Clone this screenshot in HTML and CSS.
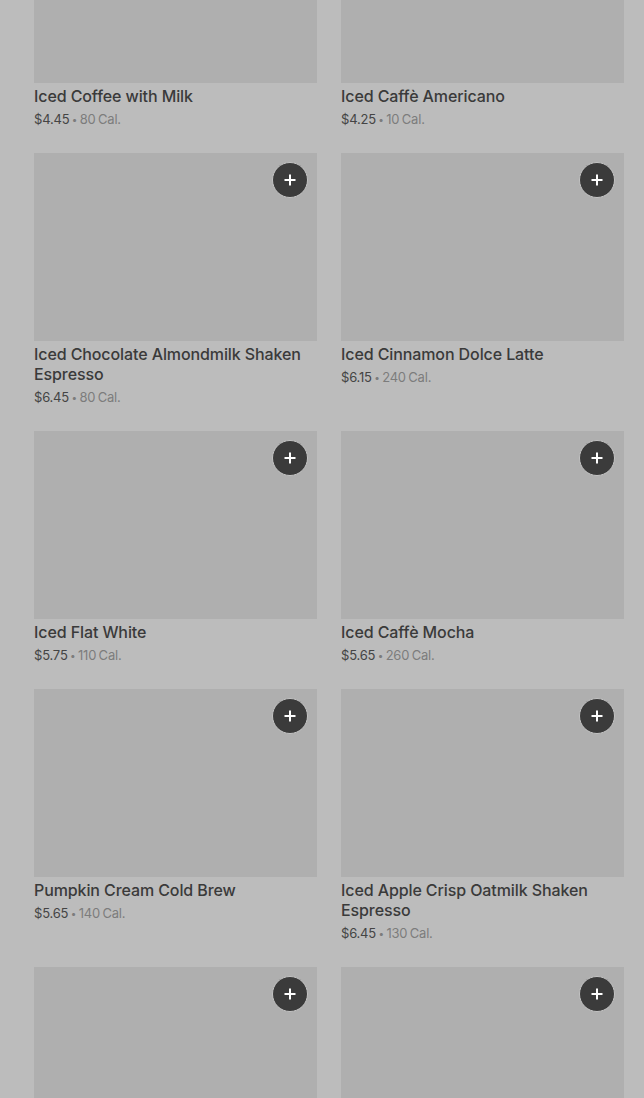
FILE: index.html
```html
<!DOCTYPE html>
<html lang="en">
<head>
<meta charset="utf-8">
<title>Menu</title>
<link rel="stylesheet" href="styles.css">
</head>
<body>
<main class="menu">
  <div class="grid">
    <article class="card">
      <div class="thumb"></div>
      <h3 class="name">Iced Coffee with Milk</h3>
      <p class="meta"><span class="price">$4.45</span> <span class="cal"><span class="dot">•</span> 80 Cal.</span></p>
    </article>
    <article class="card">
      <div class="thumb"></div>
      <h3 class="name">Iced Caffè Americano</h3>
      <p class="meta"><span class="price">$4.25</span> <span class="cal"><span class="dot">•</span> 10 Cal.</span></p>
    </article>
    <article class="card">
      <div class="thumb"><button class="add" aria-label="Add"><svg viewBox="0 0 14 14" width="14" height="14"><path d="M7 1.5v11M1.5 7h11" stroke="#fff" stroke-width="2"/></svg></button></div>
      <h3 class="name">Iced Chocolate Almondmilk Shaken Espresso</h3>
      <p class="meta"><span class="price">$6.45</span> <span class="cal"><span class="dot">•</span> 80 Cal.</span></p>
    </article>
    <article class="card">
      <div class="thumb"><button class="add" aria-label="Add"><svg viewBox="0 0 14 14" width="14" height="14"><path d="M7 1.5v11M1.5 7h11" stroke="#fff" stroke-width="2"/></svg></button></div>
      <h3 class="name">Iced Cinnamon Dolce Latte</h3>
      <p class="meta"><span class="price">$6.15</span> <span class="cal"><span class="dot">•</span> 240 Cal.</span></p>
    </article>
    <article class="card">
      <div class="thumb"><button class="add" aria-label="Add"><svg viewBox="0 0 14 14" width="14" height="14"><path d="M7 1.5v11M1.5 7h11" stroke="#fff" stroke-width="2"/></svg></button></div>
      <h3 class="name">Iced Flat White</h3>
      <p class="meta"><span class="price">$5.75</span> <span class="cal"><span class="dot">•</span> 110 Cal.</span></p>
    </article>
    <article class="card">
      <div class="thumb"><button class="add" aria-label="Add"><svg viewBox="0 0 14 14" width="14" height="14"><path d="M7 1.5v11M1.5 7h11" stroke="#fff" stroke-width="2"/></svg></button></div>
      <h3 class="name">Iced Caffè Mocha</h3>
      <p class="meta"><span class="price">$5.65</span> <span class="cal"><span class="dot">•</span> 260 Cal.</span></p>
    </article>
    <article class="card">
      <div class="thumb"><button class="add" aria-label="Add"><svg viewBox="0 0 14 14" width="14" height="14"><path d="M7 1.5v11M1.5 7h11" stroke="#fff" stroke-width="2"/></svg></button></div>
      <h3 class="name">Pumpkin Cream Cold Brew</h3>
      <p class="meta"><span class="price">$5.65</span> <span class="cal"><span class="dot">•</span> 140 Cal.</span></p>
    </article>
    <article class="card">
      <div class="thumb"><button class="add" aria-label="Add"><svg viewBox="0 0 14 14" width="14" height="14"><path d="M7 1.5v11M1.5 7h11" stroke="#fff" stroke-width="2"/></svg></button></div>
      <h3 class="name">Iced Apple Crisp Oatmilk Shaken Espresso</h3>
      <p class="meta"><span class="price">$6.45</span> <span class="cal"><span class="dot">•</span> 130 Cal.</span></p>
    </article>
    <article class="card">
      <div class="thumb"><button class="add" aria-label="Add"><svg viewBox="0 0 14 14" width="14" height="14"><path d="M7 1.5v11M1.5 7h11" stroke="#fff" stroke-width="2"/></svg></button></div>
    </article>
    <article class="card">
      <div class="thumb"><button class="add" aria-label="Add"><svg viewBox="0 0 14 14" width="14" height="14"><path d="M7 1.5v11M1.5 7h11" stroke="#fff" stroke-width="2"/></svg></button></div>
    </article>
  </div>
</main>
</body>
</html>
```

FILE: styles.css
```css
html, body {
  margin: 0;
  padding: 0;
  background: #bcbcbc;
  overflow: hidden;
  height: 1098px;
}

body {
  font-family: Inter, "Noto Sans", "Liberation Sans", sans-serif;
  color: #3a3a3a;
}

.menu {
  padding: 0 20px 0 34px;
}

.grid {
  margin-top: -105px;
  display: grid;
  grid-template-columns: 283px 283px;
  column-gap: 24px;
  row-gap: 24px;
  align-items: start;
}

.card {
  display: flex;
  flex-direction: column;
}

.thumb {
  position: relative;
  height: 188px;
  background: #afafaf;
}

.add {
  position: absolute;
  top: 9px;
  right: 9px;
  width: 36px;
  height: 36px;
  border-radius: 50%;
  border: 1px solid #c4c4c4;
  background: #3b3b3b;
  padding: 0;
  display: flex;
  align-items: center;
  justify-content: center;
  box-sizing: border-box;
}

.add svg {
  display: block;
}

.name {
  margin: 3px 0 0;
  font-size: 16px;
  line-height: 20px;
  font-weight: 500;
  color: #3a3a3a;
  letter-spacing: -0.1px;
}

.meta {
  margin: 3px 0 0;
  height: 20px;
  font-size: 13px;
  line-height: 20px;
  letter-spacing: -0.2px;
  word-spacing: -1px;
}

.price {
  color: #444;
}

.cal {
  color: #7c7c7c;
}

.dot {
  font-size: 10px;
  line-height: 0;
  vertical-align: 1px;
}
```
